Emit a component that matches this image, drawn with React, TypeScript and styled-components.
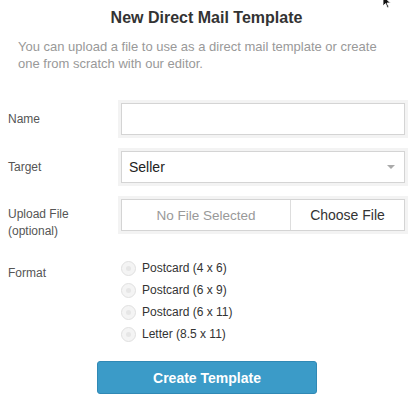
import React from 'react'
import styled, { createGlobalStyle } from 'styled-components'

const GlobalStyle = createGlobalStyle`
  html, body {
    margin: 0;
    padding: 0;
    background: #fff;
  }
  body {
    font-family: "Liberation Sans", Arial, Helvetica, sans-serif;
    color: #333;
  }
`

const Page = styled.div`
  position: relative;
  width: 417px;
  padding: 8px 12px 0 8px;
  box-sizing: border-box;
`

// mouse pointer caught in the screenshot, top right corner
const Pointer = styled.svg`
  position: absolute;
  top: -5px;
  left: 382px;
`

const Title = styled.h1`
  margin: 0;
  font-size: 16px;
  font-weight: 700;
  color: #333;
  text-align: center;
  line-height: 20px;
`

const Intro = styled.p`
  margin: 10px 0 0 10px;
  max-width: 365px;
  font-size: 13px;
  line-height: 17px;
  color: #999;
`

const Form = styled.form`
  margin-top: 31px;
  display: flex;
  flex-direction: column;
  gap: 16px;
`

const Row = styled.div<{ align?: string; offset?: number }>`
  display: grid;
  grid-template-columns: 113px 1fr;
  align-items: ${props => props.align || 'center'};
  padding-top: ${props => props.offset || 0}px;
`

const Label = styled.label<{ nudge?: number }>`
  font-size: 12px;
  line-height: 17px;
  color: #555;
  padding-top: ${props => props.nudge || 0}px;
`

const Field = styled.div`
  height: 32px;
  box-sizing: border-box;
  border: 1px solid #d4d4d4;
  box-shadow: 0 0 0 3px #f3f3f3;
  background: #fff;
  display: flex;
  align-items: center;
`

const SelectValue = styled.span`
  flex: 1;
  padding-left: 7px;
  font-size: 14px;
  color: #222;
`

const Caret = styled.span`
  width: 0;
  height: 0;
  margin-right: 9px;
  border-left: 4px solid transparent;
  border-right: 4px solid transparent;
  border-top: 4px solid #aaa;
`

const FilePart = styled.span<{ muted?: boolean; width?: string }>`
  height: 100%;
  display: flex;
  align-items: center;
  justify-content: center;
  font-size: ${props => (props.muted ? '13.5px' : '14px')};
  color: ${props => (props.muted ? '#999' : '#333')};
  ${props => (props.width ? `width: ${props.width};` : 'flex: 1;')}
  & + & {
    border-left: 1px solid #ddd;
  }
`

const Radios = styled.div`
  display: flex;
  flex-direction: column;
  gap: 5px;
`

const RadioOption = styled.label`
  display: flex;
  align-items: center;
  gap: 6px;
  font-size: 12px;
  line-height: 17px;
  color: #333;
`

const RadioDot = styled.span`
  width: 15px;
  height: 15px;
  box-sizing: border-box;
  border-radius: 50%;
  border: 1px solid #e0e0e0;
  background: #f4f4f4;
  display: flex;
  align-items: center;
  justify-content: center;
  &::after {
    content: '';
    width: 5px;
    height: 5px;
    border-radius: 50%;
    background: #e6e6e6;
  }
`

const Actions = styled.div`
  display: flex;
  justify-content: center;
  margin-top: 2px;
  padding-left: 1px;
`

const Button = styled.button`
  width: 220px;
  height: 33px;
  border: 1px solid #3089b5;
  border-radius: 3px;
  background: #3b9bc8;
  color: #fff;
  font-family: "Liberation Sans", Arial, sans-serif;
  font-size: 14px;
  font-weight: 700;
  cursor: pointer;
`

const formats = ['Postcard (4 x 6)', 'Postcard (6 x 9)', 'Postcard (6 x 11)', 'Letter (8.5 x 11)']

const App: React.FC = () => {
  return (
    <Page>
      <GlobalStyle />
      <Pointer width="12" height="14" viewBox="0 0 12 14">
        <path d="M1 1 L1 11 L3.5 8.5 L5.5 13 L7 12.3 L5 8 L8.5 8 Z" fill="#111" stroke="#fff" strokeWidth="0.8" />
      </Pointer>
      <Title>New Direct Mail Template</Title>
      <Intro>
        You can upload a file to use as a direct mail template or create one from scratch with our
        editor.
      </Intro>
      <Form onSubmit={e => e.preventDefault()}>
        <Row>
          <Label>Name</Label>
          <Field />
        </Row>
        <Row>
          <Label>Target</Label>
          <Field>
            <SelectValue>Seller</SelectValue>
            <Caret />
          </Field>
        </Row>
        <Row align="start">
          <Label nudge={7}>
            Upload File
            <br />
            (optional)
          </Label>
          <Field>
            <FilePart muted>No File Selected</FilePart>
            <FilePart width="113px">Choose File</FilePart>
          </Field>
        </Row>
        <Row align="start" offset={4}>
          <Label nudge={5}>Format</Label>
          <Radios>
            {formats.map(_format => (
              <RadioOption key={_format}>
                <RadioDot />
                {_format}
              </RadioOption>
            ))}
          </Radios>
        </Row>
        <Actions>
          <Button type="button">Create Template</Button>
        </Actions>
      </Form>
    </Page>
  )
}

export default App
